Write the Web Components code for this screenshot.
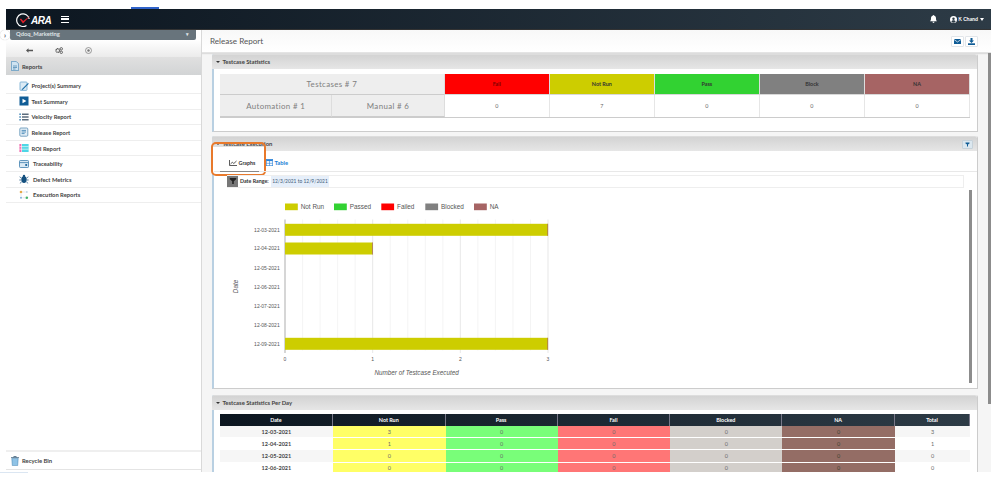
<!DOCTYPE html>
<html lang="en"><head><meta charset="utf-8"><title>Release Report</title>
<style>
html,body{margin:0;padding:0;background:#fff;overflow:hidden}
body{width:999px;height:481px;font-family:Lato,"Noto Sans",sans-serif;color:#444}
</style></head><body>
<q-app>
  <q-nav slot="nav"></q-nav>
  <q-sidebar slot="side">
    <q-menu-item label="Project(s) Summary" icon="doc"></q-menu-item>
    <q-menu-item label="Test Summary" icon="play"></q-menu-item>
    <q-menu-item label="Velocity Report" icon="list"></q-menu-item>
    <q-menu-item label="Release Report" icon="release"></q-menu-item>
    <q-menu-item label="ROI Report" icon="roi"></q-menu-item>
    <q-menu-item label="Traceability" icon="trace" indent></q-menu-item>
    <q-menu-item label="Defect Metrics" icon="bug" indent></q-menu-item>
    <q-menu-item label="Execution Reports" icon="exec" indent></q-menu-item>
  </q-sidebar>
  <q-main slot="main">
    <q-panel heading="Testcase Statistics" style="height:78px;margin-top:1px"><q-stat-table></q-stat-table></q-panel>
    <q-panel heading="Testcase Execution" filter style="height:253px;margin-top:4px">
      <q-highlight></q-highlight>
      <q-tabs></q-tabs>
      <q-date-range></q-date-range>
      <q-chart></q-chart>
    </q-panel>
    <q-panel heading="Testcase Statistics Per Day" style="height:120px;margin-top:6px"><q-day-table></q-day-table></q-panel>
  </q-main>
</q-app>
<script>
const icons={
doc:'<svg viewBox="0 0 10 10" width="10" height="10"><rect x="1" y="1" width="7" height="8.4" rx=".8" fill="#dcebf5" stroke="#6fa8cf" stroke-width=".8"/><path d="M3 8 9 2l.8.8-6 6-1.2.2z" fill="#1d6ea8"/></svg>',
play:'<svg viewBox="0 0 10 10" width="10" height="10"><rect x=".5" y=".5" width="9" height="9" fill="#0f5c96"/><path d="M3.5 2.8 7.4 5 3.5 7.2z" fill="#fff"/></svg>',
list:'<svg viewBox="0 0 10 10" width="10" height="10"><g fill="#1d6ea8"><rect x=".4" y="1.5" width="1.4" height="1.4"/><rect x=".4" y="4.3" width="1.4" height="1.4"/><rect x=".4" y="7.1" width="1.4" height="1.4"/></g><g fill="#34495e"><rect x="3" y="1.6" width="6.6" height="1.2"/><rect x="3" y="4.4" width="6.6" height="1.2"/><rect x="3" y="7.2" width="6.6" height="1.2"/></g></svg>',
release:'<svg viewBox="0 0 10 10" width="10" height="10"><rect x=".8" y="1" width="8" height="8.2" rx="1" fill="#e3eef6" stroke="#5c8fb5" stroke-width=".8"/><g stroke="#1d6ea8" stroke-width=".7"><path d="M2.6 3.4h4.4M2.6 5h4.4M2.6 6.6h3"/></g></svg>',
roi:'<svg viewBox="0 0 10 10" width="10" height="10"><rect x=".4" y="1" width="2" height="8" fill="#f06fb0"/><rect x="3" y="1" width="6.6" height="8" fill="#4fd6e6"/><path d="M.4 3.6h9.2M.4 6.2h9.2" stroke="#fff" stroke-width=".6"/></svg>',
trace:'<svg viewBox="0 0 10 10" width="10" height="10"><rect x=".5" y="1.5" width="9" height="7" rx=".8" fill="#d9e9f4" stroke="#3f7fae" stroke-width=".8"/><path d="M.8 3.6h8.4" stroke="#3f7fae" stroke-width=".8"/><circle cx="7.2" cy="6" r="1.1" fill="#0f5c96"/></svg>',
bug:'<svg viewBox="0 0 10 10" width="10" height="10"><ellipse cx="5" cy="5.6" rx="2.7" ry="3.4" fill="#14507f"/><circle cx="5" cy="1.9" r="1.2" fill="#14507f"/><path d="M2.4 4 .6 2.8M2.2 6H.3M2.6 8 .9 9.3M7.6 4l1.8-1.2M7.8 6h1.9M7.4 8l1.7 1.3" stroke="#14507f" stroke-width=".7"/></svg>',
exec:'<svg viewBox="0 0 10 10" width="10" height="10"><circle cx="2" cy="2" r="1.3" fill="#e5a94a"/><circle cx="7.8" cy="2" r="1" fill="#c3d6e4"/><circle cx="2" cy="7.8" r="1" fill="#7fb4da"/><circle cx="7.8" cy="7.8" r="1.3" fill="#45b56d"/><path d="M3.5 2h3M2 3.5v3M3.4 7.8h3" stroke="#ccd" stroke-width=".5"/></svg>',
filter:'<svg viewBox="0 0 10 10" width="100%" height="100%" style="display:block"><path d="M1 1.2h8v1.6L6 5.2v3.6H4V5.2L1 2.8z" fill="currentColor"/></svg>'
};
const F='Lato,"Noto Sans",sans-serif';
function def(name,css,html,init){
  customElements.define(name,class extends HTMLElement{
    connectedCallback(){
      if(this.shadowRoot)return;
      const r=this.attachShadow({mode:'open'});
      r.innerHTML='<style>'+css+'</style>'+(typeof html==='function'?html(this):html);
      if(init)init(this,r);
    }
  });
}
def('q-app',`
:host{display:block;height:481px;position:relative}
.tab{width:28px;height:2px;margin:7px 0 0 131px;background:#2f62c9}
.frame{width:985px;height:463px;margin-left:6px;display:grid;grid-template-rows:21px 1fr;grid-template-columns:196px 1fr;overflow:hidden;background:#f5f5f5}
.nav{grid-column:1/3}
.toggle{position:absolute;left:0;top:23px;width:10px;height:10px;border-radius:50%;background:#fff;box-shadow:0 0 1px #bbb;display:flex;align-items:center;justify-content:center;color:#445;font:700 7px ${F}}
.foot{height:1px;width:28px;background:#dbe6f2}
`,`<div class="tab"></div><div class="frame"><div class="nav"><slot name="nav"></slot></div><slot name="side"></slot><slot name="main"></slot></div><div class="foot"></div><div class="toggle">›</div>`);
def('q-nav',`
:host{display:flex;align-items:center;height:21px;background:linear-gradient(90deg,#0c1620,#2d3b46);color:#fff;border-bottom:1px solid #333;box-sizing:border-box}
.logo{display:flex;align-items:center;margin-left:10px;width:45px;margin-top:2px}
.ara{font:italic 700 10px "Liberation Sans",sans-serif;letter-spacing:-.5px}
.ham{width:8px;height:7px;margin-top:1px;border-top:1.6px solid #fff;border-bottom:1.6px solid #fff;position:relative;box-sizing:border-box}
.ham i{position:absolute;left:0;right:0;top:1.2px;height:1.4px;background:#fff}
.sp{flex:1}
.bell{margin-right:13px;display:flex}
.user{display:flex;align-items:center;gap:1.500px;font:700 5.200px ${F};margin-right:7px}
.car{width:0;height:0;border:2.400px solid transparent;border-top:3px solid #fff;border-bottom:0;margin-left:.5px}
`,`<div class="logo"><svg width="15" height="15" viewBox="0 0 15 15"><path d="M10.5 12.4A6.3 6.3 0 1 1 13.2 6" fill="none" stroke="#fff" stroke-width="1.2"/><path d="M3.8 6.2 7 10.4 14.5 2.6 7.2 8 5 5.6z" fill="#e0202a"/></svg><span class="ara">ARA</span></div>
<div class="ham"><i></i></div><div class="sp"></div>
<div class="bell"><svg width="7" height="8" viewBox="0 0 7 8"><path d="M3.5 0c.4 0 .6.3.6.6C5.3 1 6 2 6 3.2c0 1.800.4 2.400 1 3H0c.6-.6 1-1.200 1-3C1 2 1.700 1 2.900.6c0-.3.200-.6.600-.6zM2.500 6.800h2c0 .6-.4 1.100-1 1.100s-1-.5-1-1.100z" fill="#fff"/></svg></div>
<div class="user"><svg width="7" height="7" viewBox="0 0 7 7"><circle cx="3.500" cy="3.500" r="3.500" fill="#fff"/><circle cx="3.500" cy="2.700" r="1.200" fill="#2a3843"/><path d="M1.300 5.600c.5-1 1.300-1.400 2.200-1.400s1.700.4 2.200 1.400A3 3 0 0 1 1.300 5.600z" fill="#2a3843"/></svg><span>K Chand</span><span class="car"></span></div>`);
def('q-sidebar',`
:host{display:flex;flex-direction:column;background:#fff;border-right:1px solid #d9d9d9;box-sizing:border-box;font-family:${F};min-height:0}
.sel{margin:0 5px 0 4px;height:9.500px;background:#68747c;border-radius:0 0 2px 2px;color:#dfe3e6;font:700 5.800px/8px ${F};padding-left:6px;display:flex;justify-content:space-between;flex:none}
.sel b{margin-right:7px;font-size:5px}
.tools{height:17px;flex:none;background:linear-gradient(#fff,#ebebeb);display:flex;align-items:center;color:#555;padding:3px 0 0 20px;box-sizing:border-box;gap:22px;margin-top:.5px}
.tools svg{display:block}
.head{height:18px;flex:none;background:linear-gradient(#e0e0e0,#d2d4d5);display:flex;align-items:center;padding-left:5px;gap:3px;font:700 5.900px ${F};color:#444}
.list{flex:1;padding-top:3.400px;min-height:0}
.bin{height:17px;flex:none;border-top:2px solid #efefef;border-bottom:1px solid #e4e4e4;display:flex;align-items:center;padding-left:5px;gap:3px;font:700 5.900px ${F};color:#444;margin-bottom:2px}
`,`<div class="sel"><span>Qdoq_Marketing</span><b>▾</b></div>
<div class="tools">
<svg width="7" height="5" viewBox="0 0 7 5"><path d="M0 2.500 2.500 .3v1.500H7v1.400H2.500v1.500z" fill="#555"/></svg>
<svg width="8" height="7" viewBox="0 0 8 7"><circle cx="2.800" cy="3.500" r="1.800" fill="none" stroke="#555" stroke-width="1.300" stroke-dasharray="1 .4"/><circle cx="6.300" cy="1.800" r="1.200" fill="none" stroke="#555" stroke-width=".9"/><circle cx="6.300" cy="5.300" r="1.200" fill="none" stroke="#555" stroke-width=".9"/></svg>
<svg width="7" height="7" viewBox="0 0 7 7"><circle cx="3.500" cy="3.500" r="3" fill="none" stroke="#777" stroke-width=".7"/><circle cx="3.500" cy="3.500" r="1.200" fill="#777"/></svg>
</div>
<div class="head"><svg width="8" height="10" viewBox="0 0 8 10"><path d="M.4.400H5.200L7.600 2.800V9.600H.4z" fill="#cfe3f1" stroke="#4c8dba" stroke-width=".7"/><path d="M2 5h4M2 6.500h4M2 8h2.500" stroke="#2b6f9f" stroke-width=".6"/></svg><span>Reports</span></div>
<div class="list"><slot></slot></div>
<div class="bin"><svg width="8" height="10" viewBox="0 0 8 10"><path d="M0 1.600h8M2.800 1.500V.5h2.400v1" stroke="#44657f" stroke-width=".8" fill="none"/><path d="M.8 2.400h6.400L6.700 9.600H1.300z" fill="#8fc3e6" stroke="#3f7fae" stroke-width=".5"/></svg><span>Recycle Bin</span></div>`);
def('q-menu-item',`
:host{display:flex;align-items:center;height:15.600px;box-sizing:border-box;border-bottom:1px solid #eee;padding-left:13px;font:700 5.800px ${F};color:#444}
svg{display:block;margin-right:2.500px}
:host([indent]) span{margin-left:1.500px}
`,h=>icons[h.getAttribute('icon')]+'<span>'+h.getAttribute('label')+'</span>');
def('q-main',`
:host{display:flex;flex-direction:column;min-height:0;min-width:0;overflow:hidden;position:relative}
.bar{flex:none;height:23px;box-sizing:border-box;background:linear-gradient(#f8f8f8,#fff);border-bottom:1px solid #e4e4e4;box-shadow:0 1px 1px #ddd;display:flex;align-items:center;justify-content:space-between;padding:0 13px 0 8px;font:400 8.100px ${F};color:#555;position:relative}
.btns{display:flex;gap:1px}
.btn{width:13px;height:11px;border:1px solid #e2e6ea;border-radius:1px;box-sizing:border-box;background:#fff;display:flex;align-items:center;justify-content:center}
.body{flex:1;padding-left:10px;padding-right:13px;min-height:0;overflow:hidden}
.sb{position:absolute;right:0;top:23px;width:3px;height:351px;background:#8c8c8c}
`,`<div class="bar"><span>Release Report</span><div class="btns"><div class="btn"><svg width="7" height="5" viewBox="0 0 7 5"><rect width="7" height="5" fill="#0f5c96"/><path d="M0 .5 3.500 3 7 .5" fill="none" stroke="#fff" stroke-width=".7"/></svg></div><div class="btn"><svg width="7" height="7" viewBox="0 0 7 7"><path d="M2.500 0h2v2.500H6L3.500 5 1 2.500h1.500z" fill="#0f5c96"/><rect y="5.300" width="7" height="1.700" fill="#0f5c96"/></svg></div></div></div><div class="body"><slot></slot></div><div class="sb"></div>`);
def('q-panel',`
:host{display:block;position:relative;background:#fff;border-left:2px solid #b9d0e2;border-right:1px solid #ccc;border-bottom:1px solid #ccc;border-radius:2px 2px 0 0;box-sizing:border-box;flex:none}
.h{height:14.500px;box-sizing:border-box;margin-left:-2px;background:linear-gradient(#d3d3d3,#e6e6e6);border-top:1px solid #ddd;border-radius:2px 2px 0 0;display:flex;align-items:center;padding-left:4px;gap:2.500px;font:700 5.900px ${F};color:#444}
.c{width:0;height:0;border:2.200px solid transparent;border-top:2.800px solid #333;border-bottom:0}
.f{position:absolute;right:4px;top:4px;width:11px;height:9px;background:#dbe7ef;border:1px solid #c6d2da;box-sizing:border-box;color:#0f5c96;padding:0 2px;border-radius:1px}
`,h=>`<div class="h"><span class="c"></span><span>${h.getAttribute('heading')}</span></div>${h.hasAttribute('filter')?'<div class="f">'+icons.filter+'</div>':''}<slot></slot>`);
def('q-highlight',`
:host{display:block;position:absolute;left:-3px;top:5.500px;width:55px;height:34px;box-sizing:border-box;border:2.300px solid #e8792b;border-radius:5px;background:linear-gradient(transparent 3px,#fff 3px);z-index:1}
`,'');
def('q-stat-table',`
:host{display:grid;margin:5px 7px 0 6px;grid-template-columns:112.500fr 112.500fr repeat(5,105.200fr);grid-template-rows:21.500px 22px;font-family:${F};border-bottom:1px solid #ccc}
div{display:flex;align-items:center;justify-content:center;box-sizing:border-box}
.big{background:#eee;color:#808080;font-size:7.900px;letter-spacing:.35px;border-right:1px solid #ddd;border-bottom:1px solid #ccc}
.hd{font-size:5.400px;font-weight:700;color:#333;border-right:1px solid #ddd;border-bottom:1px solid #d8d8d8}
.v{font-size:5.400px;color:#666;border-right:1px solid #e6e6e6}
`,`<div class="big" style="grid-column:span 2">Testcases # 7</div>
<div class="hd" style="background:#ff0000;color:#7a0000">Fail</div><div class="hd" style="background:#cdcd00">Not Run</div><div class="hd" style="background:#32d232">Pass</div><div class="hd" style="background:#808080">Block</div><div class="hd" style="background:#a66464">NA</div>
<div class="big">Automation # 1</div><div class="big">Manual # 6</div>
<div class="v">0</div><div class="v">7</div><div class="v">0</div><div class="v">0</div><div class="v">0</div>`);
def('q-tabs',`
:host{display:flex;height:21px;position:relative;z-index:2;border-bottom:1px solid #e8e8e8;font:700 5.300px ${F};padding-left:6px;box-sizing:border-box}
.t{width:39px;display:flex;align-items:center;justify-content:center;gap:2px;border-bottom:1px solid #888;color:#333;box-sizing:border-box;height:21px;padding:4px 0 0 5px}
.u{display:flex;align-items:center;gap:1.500px;margin-left:7px;color:#1e7fd6;padding-top:3px;font-size:5.800px}
`,`<div class="t"><svg width="8" height="6" viewBox="0 0 8 6"><path d="M.5 0v5.500H8" fill="none" stroke="#333" stroke-width=".8"/><path d="M1.500 4 3.300 2.300 4.800 3.500 7.500 1" fill="none" stroke="#333" stroke-width=".8"/></svg><span>Graphs</span></div>
<div class="u"><svg width="7" height="7" viewBox="0 0 7 7"><rect x=".3" y=".3" width="6.400" height="6.400" fill="#fff" stroke="#2a82d8" stroke-width=".6"/><rect x=".3" y=".3" width="6.400" height="1.800" fill="#2a82d8"/><path d="M3.500 2v4.700M.3 4.300h6.400" stroke="#2a82d8" stroke-width=".6"/></svg><span>Table</span></div>`);
def('q-date-range',`
:host{display:flex;align-items:center;height:13px;margin:3px 13px 0 13px;position:relative;z-index:2;border:1px solid #eee;border-left:0;box-sizing:border-box;font:700 5.300px ${F};color:#333}
.i{width:11px;height:11px;background:#777;color:#222;padding:1.500px;box-sizing:border-box;flex:none}
.l{margin:0 2.500px 0 2px}
.v{background:#e6effa;color:#3c5a78;font-weight:400;font-size:4.900px;padding:0 1px;line-height:11px;height:11px}
`,`<div class="i">${icons.filter}</div><span class="l">Date Range:</span><span class="v">12/3/2021 to 12/9/2021</span>`);
def('q-chart',`
:host{display:block;position:relative;height:196px;margin-top:1px}
svg{display:block;position:absolute;left:0;top:0}
text{font-family:"Liberation Sans",sans-serif;fill:#555}
.sb{position:absolute;left:755px;top:1px;width:2.500px;height:193px;background:#8c8c8c}
`,()=>{
  const X=v=>285+87.67*v,dates=['12-03-2021','12-04-2021','12-05-2021','12-06-2021','12-07-2021','12-08-2021','12-09-2021'];
  const ly=[229.3,248,267.3,286.3,305.7,324.7,343.3],vals=[3,1,0,0,0,0,3];
  let s='';
  for(let i=0;i<=15;i++){const x=285+17.533*i,maj=i%5==0;s+=`<line x1="${x}" x2="${x}" y1="219" y2="${maj?352.500:350}" stroke="${maj?'#e2e2e2':'#f1f1f1'}" stroke-width=".8"/>`}
  s+=`<line x1="285" x2="285" y1="219" y2="352.500" stroke="#aaa" stroke-width=".8"/>`;
  ly.forEach((y,i)=>{
    s+=`<text x="279.700" y="${y+1.800}" text-anchor="end" font-size="5">${dates[i]}</text>`;
    if(vals[i])s+=`<rect x="285" y="${y-6}" width="${X(vals[i])-285}" height="12" fill="#cdcd00"/><rect x="${X(vals[i])-.6}" y="${y-6}" width=".7" height="12" fill="#a66464"/>`;
  });
  [0,1,2,3].forEach(v=>{s+=`<text x="${X(v)}" y="360.500" text-anchor="middle" font-size="5">${v}</text>`});
  [['Not Run',285,'#cdcd00',300.700],['Passed',334,'#32d232',349.700],['Failed',381.300,'#ff0000',397],['Blocked',425.300,'#808080',441],['NA',474,'#a66464',489.700]].forEach(([t,x,c,tx])=>{
    s+=`<rect x="${x}" y="203" width="12.800" height="6.700" fill="${c}"/><text x="${tx}" y="208.500" font-size="6.400">${t}</text>`;
  });
  s+=`<text x="416.600" y="374" text-anchor="middle" font-size="6.300" font-style="italic">Number of Testcase Executed</text>`;
  s+=`<text transform="translate(238 286) rotate(-90)" text-anchor="middle" font-size="6.300" font-style="italic">Date</text>`;
  return `<svg width="757" height="196" viewBox="214 188.500 757 196">${s}</svg><div class="sb"></div>`;
});
def('q-day-table',`
:host{display:block;margin:4px 7px 0 6px;font:700 5.400px ${F}}
.g{display:grid;grid-template-columns:113fr 113fr 112fr 113fr 112fr 113fr 75fr}
.hd{background:linear-gradient(90deg,#0c1620,#2d3b46);height:12.500px}
.hd div{display:flex;align-items:center;justify-content:center;color:#fff;font-weight:700;border-right:1px solid #778}
.r{height:12.200px;border-bottom:.7px solid rgba(255,255,255,.5);box-sizing:border-box}
.r div{display:flex;align-items:center;justify-content:center;color:#6b6b6b;font-weight:400;font-size:5.500px}
.r div:first-child{color:#444;font-weight:700}
`,()=>{
  const bg=['','#ffff66','#79fe79','#ff7676','#d3cfcb','#946d65',''];
  const rows=[['12-03-2021',3,0,0,0,0,3],['12-04-2021',1,0,0,0,0,1],['12-05-2021',0,0,0,0,0,0],['12-06-2021',0,0,0,0,0,0]];
  let h='<div class="g hd">'+['Date','Not Run','Pass','Fail','Blocked','NA','Total'].map(t=>`<div>${t}</div>`).join('')+'</div>';
  rows.forEach((r,i)=>{
    h+='<div class="g r">'+r.map((v,j)=>`<div style="background:${bg[j]||(i%2?'#fff':'#f6f6f6')}${j==5?';color:#443':''}">${v}</div>`).join('')+'</div>';
  });
  return h;
});
</script>
</body></html>
